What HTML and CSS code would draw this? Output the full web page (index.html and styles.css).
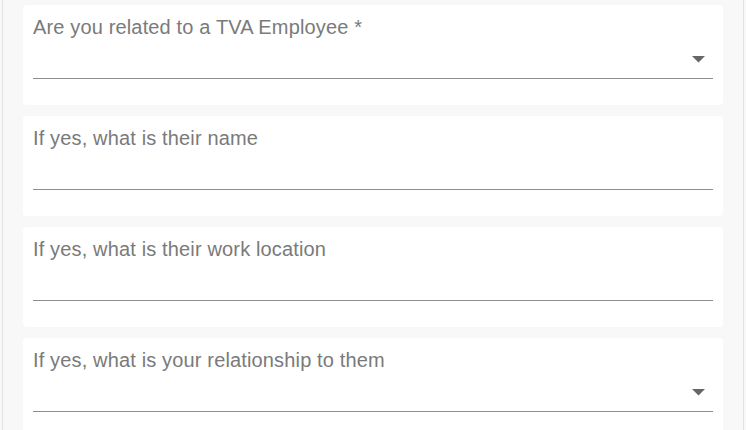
FILE: index.html
```html
<!DOCTYPE html>
<html lang="en">
<head>
    <meta charset="UTF-8">
    <meta name="viewport" content="width=device-width, initial-scale=1.0">
    <title>TVA Relationship</title>
    <link rel="stylesheet" href="styles.css">
</head>
<body>
    <div class="form-wrap">
        <div class="question">
            <label class="question-label">Are you related to a TVA Employee *</label>
            <div class="field select-field">
                <svg class="arrow" width="13" height="7" viewBox="0 0 13 7"><polygon points="0,0 13,0 6.5,6.5" fill="#666"/></svg>
            </div>
        </div>
        <div class="question">
            <label class="question-label">If yes, what is their name</label>
            <div class="field"></div>
        </div>
        <div class="question">
            <label class="question-label">If yes, what is their work location</label>
            <div class="field"></div>
        </div>
        <div class="question">
            <label class="question-label">If yes, what is your relationship to them</label>
            <div class="field select-field">
                <svg class="arrow" width="13" height="7" viewBox="0 0 13 7"><polygon points="0,0 13,0 6.5,6.5" fill="#666"/></svg>
            </div>
        </div>
    </div>
</body>
</html>
```

FILE: styles.css
```css
* {
    margin: 0;
    padding: 0;
    box-sizing: border-box;
    font-family: 'Liberation Sans', Arial, sans-serif;
}

body {
    background: #f8f8f8;
}

.form-wrap {
    margin: 0 2px;
    min-height: 430px;
    border-left: 1px solid #e2e2e2;
    border-right: 1px solid #e2e2e2;
    padding: 5px 20px 0;
}

.question {
    background: #fff;
    border-radius: 4px;
    height: 100px;
    margin-bottom: 11px;
    padding: 11px 10px 0;
}

.question-label {
    display: block;
    font-size: 20px;
    line-height: 23px;
    letter-spacing: 0.15px;
    color: #7a7a7a;
}

.field {
    height: 40px;
    border-bottom: 1px solid #8f8f8f;
}

.select-field {
    display: flex;
    justify-content: flex-end;
    align-items: center;
    padding-right: 8px;
}

.arrow {
    display: block;
    margin-top: 1px;
}
```
